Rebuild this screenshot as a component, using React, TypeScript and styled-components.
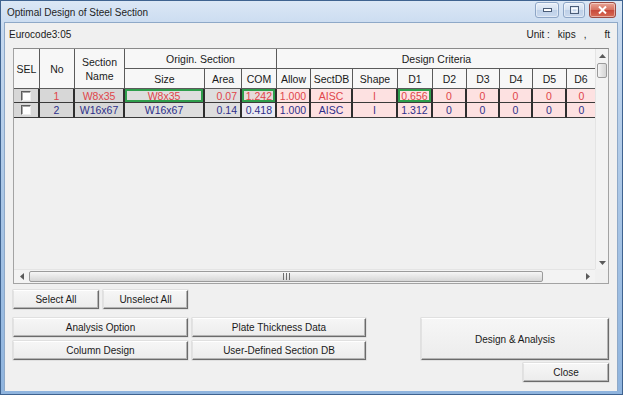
import React from 'react';
import styled, { createGlobalStyle } from 'styled-components';

const GlobalStyle = createGlobalStyle`
  html, body { margin: 0; padding: 0; background: #f0f0f0; }
  body { font-family: "Liberation Sans", Arial, sans-serif; }
  * { box-sizing: border-box; }
`;

const Window = styled.div`
  width: 623px;
  height: 395px;
  display: flex;
  flex-direction: column;
  border: 1px solid #3f6390;
  background: linear-gradient(#dbe7f5, #c6d9ef 30px, #a9c6e6 200px, #8fb4de);
  padding: 0 4px 3px 3px;
`;

const TitleBar = styled.div`
  height: 21px;
  display: flex;
  align-items: center;
  padding-left: 3px;
`;

const Title = styled.div`
  flex: 1;
  font-size: 10px;
  color: #1e1e1e;
  margin-top: 1px;
`;

const CaptionGroup = styled.div`
  display: flex;
  align-items: flex-start;
  gap: 4px;
  align-self: flex-start;
  margin-top: 1px;
  margin-right: 2px;
`;

const CaptionBtn = styled.div<{ $w: number; $close?: boolean }>`
  width: ${(p) => p.$w}px;
  height: 16px;
  border-radius: 3px;
  border: 1px solid ${(p) => (p.$close ? '#9b4a42' : '#8ea6c6')};
  background: ${(p) =>
    p.$close
      ? 'linear-gradient(#eaa697, #d5705f 50%, #c7483a 51%, #d86b55)'
      : 'linear-gradient(#e9f0f9, #d3e0f0 50%, #bfd1e8 51%, #c9d9ee)'};
  display: flex;
  align-items: center;
  justify-content: center;
  box-shadow: inset 0 0 0 1px rgba(255, 255, 255, 0.45);
`;

const Client = styled.div`
  flex: 1;
  background: #f0f0f0;
  display: flex;
  flex-direction: column;
  padding: 0 8px 0 8px;
  border: 1px solid #8fa9c8;
  border-bottom: none;
`;

const InfoRow = styled.div`
  height: 20px;
  margin-top: 1px;
  display: flex;
  align-items: center;
  justify-content: space-between;
  font-size: 10px;
  color: #1a1a1a;
`;

const InfoLeft = styled.span`
  margin-left: -4px;
`;

const UnitGroup = styled.div`
  display: flex;
  align-items: center;
  margin-right: -1px;
`;

const UnitPart = styled.span<{ $ml: number }>`
  margin-left: ${(p) => p.$ml}px;
`;

const GridFrame = styled.div`
  margin-top: 4px;
  height: 236px;
  border: 1px solid #a3a3a3;
  border-top-color: #8a8a8a;
  display: grid;
  grid-template-columns: 1fr 13px;
  grid-template-rows: 1fr 14px;
  background: #f0f0f0;
`;

const Sheet = styled.div`
  overflow: hidden;
`;

const SheetGrid = styled.div`
  display: grid;
  grid-template-columns: 26px 35px 50px 80px 37px 35px 34px 42px 45px 35px 34px 33px 33px 34px 29px;
  grid-template-rows: 20px 20px 14px 15px;
  font-size: 10.5px;
`;

const HeadCell = styled.div<{ $cols?: number; $rows?: number; $noRight?: boolean }>`
  grid-column: span ${(p) => p.$cols ?? 1};
  grid-row: span ${(p) => p.$rows ?? 1};
  background: #f7f7f7;
  color: #1a1a1a;
  border-right: ${(p) => (p.$noRight ? 'none' : '1px solid #5a5a5a')};
  border-bottom: 1px solid #5a5a5a;
  display: flex;
  align-items: center;
  justify-content: center;
  text-align: center;
  line-height: 14px;
  white-space: nowrap;
  overflow: hidden;
`;

const DataCell = styled.div<{ $bg: string; $fg: string; $hl?: boolean; $align?: string; $noRight?: boolean }>`
  background: ${(p) => p.$bg};
  color: ${(p) => p.$fg};
  border-right: ${(p) => (p.$noRight ? 'none' : '2px solid #2e2e2e')};
  border-bottom: 1px solid #3a3a3a;
  display: flex;
  align-items: center;
  justify-content: ${(p) => p.$align ?? 'center'};
  padding: 0 3px;
  white-space: nowrap;
  overflow: hidden;
  box-shadow: ${(p) => (p.$hl ? 'inset 0 0 0 2px #2f9e4c' : 'none')};
`;

const CheckBox = styled.span`
  width: 10px;
  height: 10px;
  background: #ffffff;
  border-top: 1px solid #5d5d5d;
  border-left: 1px solid #5d5d5d;
  border-right: 1px solid #ececec;
  border-bottom: 1px solid #ececec;
  box-shadow: inset 1px 1px 0 #a8a8a8;
`;

const VScroll = styled.div`
  display: flex;
  flex-direction: column;
  background: #f3f3f3;
  border-left: 1px solid #e4e4e4;
`;

const HScroll = styled.div`
  display: flex;
  align-items: stretch;
  background: #f3f3f3;
  border-top: 1px solid #e4e4e4;
`;

const Corner = styled.div`
  background: #f0f0f0;
`;

const ArrowBox = styled.div<{ $w?: number; $h?: number }>`
  width: ${(p) => (p.$w ? `${p.$w}px` : 'auto')};
  height: ${(p) => (p.$h ? `${p.$h}px` : 'auto')};
  display: flex;
  align-items: center;
  justify-content: center;
  flex-shrink: 0;
`;

const Track = styled.div`
  flex: 1;
`;

const VThumb = styled.div`
  height: 15px;
  margin: 1px 1px 0 1px;
  border: 1px solid #9b9b9b;
  border-radius: 2px;
  background: linear-gradient(to right, #f6f6f6, #e3e3e3 50%, #d6d6d6);
`;

const HThumb = styled.div`
  width: 514px;
  margin: 1px 0;
  border: 1px solid #9b9b9b;
  border-radius: 2px;
  background: linear-gradient(#f6f6f6, #e6e6e6 50%, #d6d6d6);
  display: flex;
  align-items: center;
  justify-content: center;
`;

const BtnRow = styled.div`
  display: flex;
  gap: 4px;
  margin-top: 6px;
`;

const Button = styled.div<{ $w?: number; $h?: number }>`
  width: ${(p) => (p.$w ? `${p.$w}px` : '100%')};
  height: ${(p) => p.$h ?? 19}px;
  display: flex;
  align-items: center;
  justify-content: center;
  font-size: 10px;
  color: #1a1a1a;
  background: linear-gradient(#f6f6f6, #ececec);
  border-top: 1px solid #ffffff;
  border-left: 1px solid #e2e2e2;
  border-right: 1px solid #6b6b6b;
  border-bottom: 1px solid #6b6b6b;
  box-shadow: inset -1px -1px 0 #b4b4b4, 0 0 0 0.5px #d0d0d0;
`;

const Lower = styled.div`
  display: flex;
  margin-top: 9px;
`;

const LeftGrid = styled.div`
  display: grid;
  grid-template-columns: 175px 174px;
  grid-template-rows: 19px 19px;
  column-gap: 4px;
  row-gap: 4px;
`;

const RightCol = styled.div`
  margin-left: auto;
  width: 188px;
  display: flex;
  flex-direction: column;
  align-items: flex-end;
  gap: 3px;
`;

const Up = () => (
  <svg width="7" height="4" viewBox="0 0 7 4"><polygon points="0,4 3.5,0 7,4" fill="#5a5a5a" /></svg>
);
const Down = () => (
  <svg width="7" height="4" viewBox="0 0 7 4"><polygon points="0,0 3.5,4 7,0" fill="#5a5a5a" /></svg>
);
const Left = () => (
  <svg width="4" height="7" viewBox="0 0 4 7"><polygon points="4,0 0,3.5 4,7" fill="#5a5a5a" /></svg>
);
const Right = () => (
  <svg width="4" height="7" viewBox="0 0 4 7"><polygon points="0,0 4,3.5 0,7" fill="#5a5a5a" /></svg>
);
const Grip = () => (
  <svg width="7" height="7" viewBox="0 0 7 7">
    <path d="M0.5 0v7M3.5 0v7M6.5 0v7" stroke="#6e6e6e" strokeWidth="1" />
  </svg>
);

const RED = '#e0454a';
const NAVY = '#2d2f8a';
const GREY = '#d7d7d7';
const GREY2 = '#dedede';
const PINK = '#fde1e1';

type Row = {
  fg: string;
  no: string;
  name: string;
  size: string;
  area: string;
  com: string;
  comBg: string;
  d1: string;
  hl: boolean;
};

const rows: Row[] = [
  { fg: RED, no: '1', name: 'W8x35', size: 'W8x35', area: '0.07', com: '1.242', comBg: '#e6dada', d1: '0.656', hl: true },
  { fg: NAVY, no: '2', name: 'W16x67', size: 'W16x67', area: '0.14', com: '0.418', comBg: '#ebebf2', d1: '1.312', hl: false },
];

export default function App() {
  return (
    <>
      <GlobalStyle />
      <Window>
        <TitleBar>
          <Title>Optimal Design of Steel Section</Title>
          <CaptionGroup>
            <CaptionBtn $w={24}>
              <svg width="9" height="4" viewBox="0 0 9 4"><rect x="0.5" y="0.5" width="8" height="3" fill="#fff" stroke="#4b5d78" /></svg>
            </CaptionBtn>
            <CaptionBtn $w={22}>
              <svg width="9" height="8" viewBox="0 0 9 8"><rect x="0.5" y="0.5" width="8" height="7" fill="none" stroke="#4b5d78" /><rect x="2" y="2.5" width="5" height="3.5" fill="none" stroke="#fff" /></svg>
            </CaptionBtn>
            <CaptionBtn $w={27} $close>
              <svg width="9" height="8" viewBox="0 0 9 8"><path d="M1 0.5l7 7M8 0.5l-7 7" stroke="#fff" strokeWidth="2" /></svg>
            </CaptionBtn>
          </CaptionGroup>
        </TitleBar>
        <Client>
          <InfoRow>
            <InfoLeft>Eurocode3:05</InfoLeft>
            <UnitGroup>
              <UnitPart $ml={0}>Unit :</UnitPart>
              <UnitPart $ml={8}>kips</UnitPart>
              <UnitPart $ml={8}>,</UnitPart>
              <UnitPart $ml={18}>ft</UnitPart>
            </UnitGroup>
          </InfoRow>
          <GridFrame>
            <Sheet>
              <SheetGrid>
                <HeadCell $rows={2}>SEL</HeadCell>
                <HeadCell $rows={2}>No</HeadCell>
                <HeadCell $rows={2}>Section<br />Name</HeadCell>
                <HeadCell $cols={3}>Origin. Section</HeadCell>
                <HeadCell $cols={9} $noRight>Design Criteria</HeadCell>
                <HeadCell>Size</HeadCell>
                <HeadCell>Area</HeadCell>
                <HeadCell>COM</HeadCell>
                <HeadCell>Allow</HeadCell>
                <HeadCell>SectDB</HeadCell>
                <HeadCell>Shape</HeadCell>
                <HeadCell>D1</HeadCell>
                <HeadCell>D2</HeadCell>
                <HeadCell>D3</HeadCell>
                <HeadCell>D4</HeadCell>
                <HeadCell>D5</HeadCell>
                <HeadCell>D6</HeadCell>
                {rows.map((r) => (
                  <React.Fragment key={r.no}>
                    <DataCell $bg={GREY} $fg={r.fg}><CheckBox /></DataCell>
                    <DataCell $bg={GREY} $fg={r.fg}>{r.no}</DataCell>
                    <DataCell $bg={GREY} $fg={r.fg}>{r.name}</DataCell>
                    <DataCell $bg={GREY2} $fg={r.fg} $hl={r.hl}>{r.size}</DataCell>
                    <DataCell $bg={GREY2} $fg={r.fg} $align="flex-end">{r.area}</DataCell>
                    <DataCell $bg={r.comBg} $fg={r.fg} $hl={r.hl} $align="flex-end">{r.com}</DataCell>
                    <DataCell $bg={PINK} $fg={r.fg}>1.000</DataCell>
                    <DataCell $bg={PINK} $fg={r.fg}>AISC</DataCell>
                    <DataCell $bg={PINK} $fg={r.fg}>I</DataCell>
                    <DataCell $bg={PINK} $fg={r.fg} $hl={r.hl}>{r.d1}</DataCell>
                    <DataCell $bg={PINK} $fg={r.fg}>0</DataCell>
                    <DataCell $bg={PINK} $fg={r.fg}>0</DataCell>
                    <DataCell $bg={PINK} $fg={r.fg}>0</DataCell>
                    <DataCell $bg={PINK} $fg={r.fg}>0</DataCell>
                    <DataCell $bg={PINK} $fg={r.fg} $noRight>0</DataCell>
                  </React.Fragment>
                ))}
              </SheetGrid>
            </Sheet>
            <VScroll>
              <ArrowBox $h={13}><Up /></ArrowBox>
              <VThumb />
              <Track />
              <ArrowBox $h={13}><Down /></ArrowBox>
            </VScroll>
            <HScroll>
              <ArrowBox $w={15}><Left /></ArrowBox>
              <HThumb><Grip /></HThumb>
              <Track />
              <ArrowBox $w={15}><Right /></ArrowBox>
            </HScroll>
            <Corner />
          </GridFrame>
          <BtnRow>
            <Button $w={86}>Select All</Button>
            <Button $w={85}>Unselect All</Button>
          </BtnRow>
          <Lower>
            <LeftGrid>
              <Button>Analysis Option</Button>
              <Button>Plate Thickness Data</Button>
              <Button>Column Design</Button>
              <Button>User-Defined Section DB</Button>
            </LeftGrid>
            <RightCol>
              <Button $h={42}>Design &amp; Analysis</Button>
              <Button $w={86}>Close</Button>
            </RightCol>
          </Lower>
        </Client>
      </Window>
    </>
  );
}
